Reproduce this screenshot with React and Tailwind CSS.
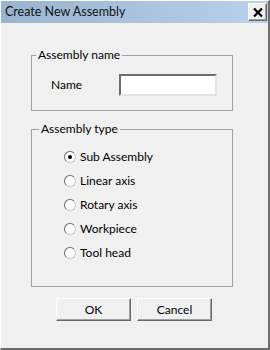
import React from "react";

const types = ["Sub Assembly", "Linear axis", "Rotary axis", "Workpiece", "Tool head"];

const Radio = ({ checked }) => (
	<span className="relative flex h-[12px] w-[12px] items-center justify-center rounded-full border border-t-[#6d6d6d] border-l-[#6d6d6d] border-r-[#c8c8c8] border-b-[#c8c8c8] bg-white">
		{checked && <span className="h-[4px] w-[4px] rounded-full bg-black" />}
	</span>
);

const Button = ({ children }) => (
	<button className="flex h-[23px] w-[75px] items-center justify-center border border-t-white border-l-white border-r-[#696969] border-b-[#696969] bg-[#f0f0f0] shadow-[inset_-1px_-1px_0_#a0a0a0]">
		{children}
	</button>
);

export default function App() {
	return (
		<div
			className="flex h-[350px] w-[270px] flex-col border-l border-t border-b-2 border-r-2 border-l-white border-t-white border-r-[#6d6d6d] border-b-[#6d6d6d] bg-[#f0f0f0] text-[12px] text-black"
			style={{ fontFamily: "Lato, 'Liberation Sans', sans-serif" }}
		>
			{/* title bar */}
			<div className="flex h-[22px] items-center justify-between bg-gradient-to-r from-[#99b4d1] to-[#b9d1ea] pl-[4px] pr-[1px]">
				<span className="text-[12.5px] text-[#111]">Create New Assembly</span>
				<button className="flex h-[18px] w-[19px] items-center justify-center border border-t-white border-l-white border-r-[#696969] border-b-[#696969] bg-[#f0f0f0] shadow-[inset_-1px_-1px_0_#a0a0a0]">
					<svg width="10" height="9" viewBox="0 0 10 9">
						<path d="M1 0.5 L9 8.5 M9 0.5 L1 8.5" stroke="black" strokeWidth="2.2" />
					</svg>
				</button>
			</div>

			<fieldset className="ml-[30px] mt-[25px] h-[63px] w-[202px] border border-[#a0a0a0]">
				<legend className="ml-[4px] px-[2px] leading-[14px]">Assembly name</legend>
				<div className="flex items-center pl-[19px] pt-[12px]">
					<span className="w-[68px]">Name</span>
					<input className="h-[22px] w-[98px] border-2 border-t-[#6d6d6d] border-l-[#6d6d6d] border-r-[#e3e3e3] border-b-[#e3e3e3] bg-white outline-none" />
				</div>
			</fieldset>

			<fieldset className="ml-[30px] mt-[11px] h-[165px] w-[202px] border border-[#a0a0a0]">
				<legend className="ml-[7px] px-[2px] leading-[14px]">Assembly type</legend>
				<div className="flex flex-col pl-[32px] pt-[9px]">
					{types.map((t, i) => (
						<label key={t} className="flex h-[24px] items-center gap-[4px]">
							<Radio checked={i === 0} />
							<span>{t}</span>
						</label>
					))}
				</div>
			</fieldset>

			<div className="ml-[55px] mt-[11px] flex gap-[6px]">
				<Button>OK</Button>
				<Button>Cancel</Button>
			</div>
		</div>
	);
}
